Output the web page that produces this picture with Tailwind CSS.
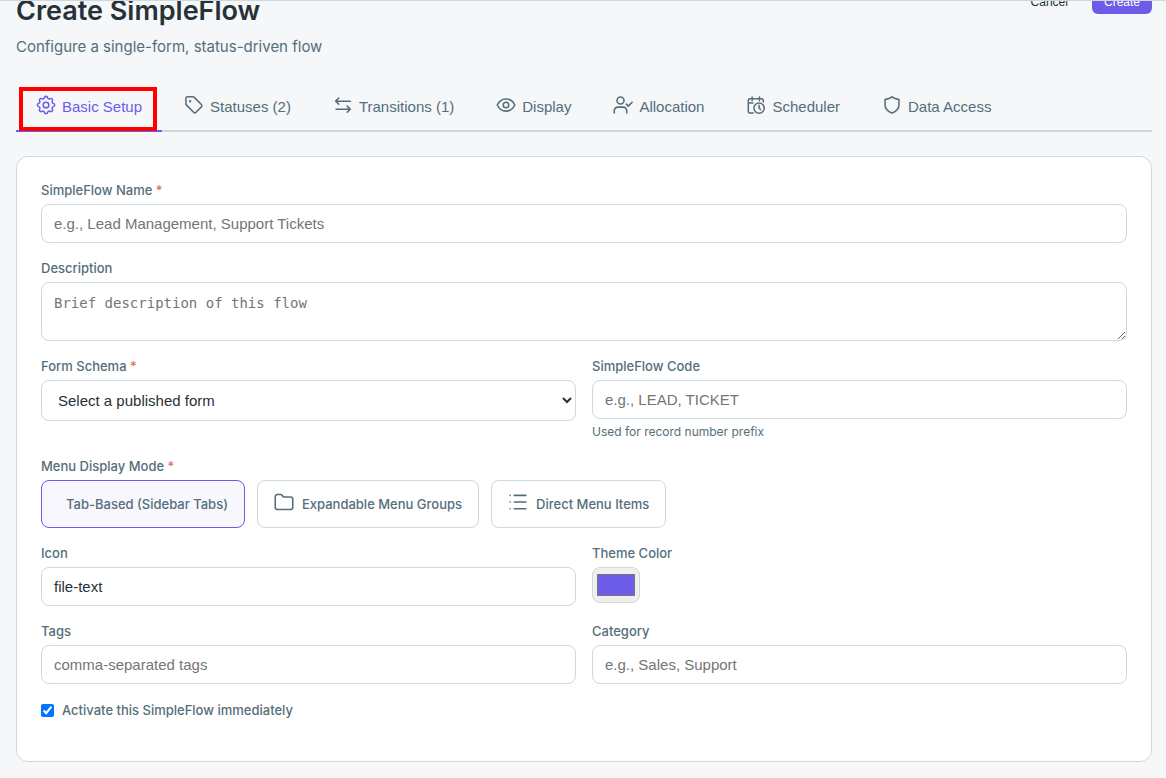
<!DOCTYPE html>
<html lang="en">

<head>
    <meta charset="UTF-8">
    <meta name="viewport" content="width=device-width, initial-scale=1.0">
    <script src="https://cdn.jsdelivr.net/npm/@tailwindcss/browser@4"></script>
    <title>Create SimpleFlow</title>
</head>

<body class="bg-[#f5f7f9] font-['Inter',sans-serif] text-[#546e7a]">
    <main class="min-h-screen overflow-hidden border-t border-[#cfd8dc] pl-4 pr-[14px] pb-4">
        <!-- page header -->
        <header class="flex items-start justify-between -mt-3 mb-6">
            <div class="pt-1">
                <h1 class="text-[27px] leading-9 font-semibold text-[#263238]">Create SimpleFlow</h1>
                <p class="mt-[7px] text-[15px] leading-[22px]">Configure a single-form, status-driven flow</p>
            </div>
            <div class="flex gap-3 font-['Liberation_Sans',Arial,sans-serif] text-xs">
                <button type="button" class="h-[25px] px-3 text-[#263238]">Cancel</button>
                <button type="button" class="h-[25px] px-3 rounded-md bg-[#6c5ce7] text-white">Create</button>
            </div>
        </header>

        <!-- tabs -->
        <nav class="flex gap-0.5 border-b-2 border-[#cfd8dc] mb-6 font-['Liberation_Sans',Arial,sans-serif] text-[15px]">
            <button type="button" class="relative flex gap-1.5 h-[50px] px-5 pt-[13px] -mb-0.5 border-b-2 border-[#6c5ce7] text-[#6c5ce7] whitespace-nowrap">
                <svg class="size-5" viewBox="1.5 1.5 21 21" fill="none" stroke="currentColor" stroke-width="1.6" stroke-linecap="round" stroke-linejoin="round">
                    <path d="M10.3 4.3c.4-1.8 3-1.8 3.4 0a1.7 1.7 0 0 0 2.6 1.1c1.5-.9 3.3.8 2.4 2.4a1.7 1.7 0 0 0 1 2.5c1.8.5 1.8 3 0 3.4a1.7 1.7 0 0 0-1 2.6c.9 1.5-.9 3.3-2.4 2.4a1.7 1.7 0 0 0-2.6 1c-.4 1.8-3 1.8-3.4 0a1.7 1.7 0 0 0-2.6-1c-1.5.9-3.3-.9-2.4-2.4a1.7 1.7 0 0 0-1-2.6c-1.8-.4-1.8-2.9 0-3.4a1.7 1.7 0 0 0 1-2.5c-.9-1.6.9-3.3 2.4-2.4a1.7 1.7 0 0 0 2.6-1.1Z" />
                    <circle cx="12" cy="12" r="3" />
                </svg>
                <span class="leading-6">Basic Setup</span>
                <span class="absolute left-[3px] right-[5px] top-[5px] -bottom-px border-4 border-[#ff0000]"></span>
            </button>
            <button type="button" class="flex gap-1.5 h-12 px-5 pt-[13px] whitespace-nowrap">
                <svg class="size-5" viewBox="-1 -1 26 26" fill="none" stroke="currentColor" stroke-width="2" stroke-linecap="round" stroke-linejoin="round">
                    <path d="M1.5 3.7v6.6c0 .7.3 1.4.8 1.9l9.2 9.2a2.2 2.2 0 0 0 3.1 0l7-7a2.2 2.2 0 0 0 0-3.1l-9.2-9.2a2.6 2.6 0 0 0-1.9-.8H3.700a2.200 2.200 0 0 0-2.200 2.400Z" />
                    <circle cx="7" cy="7" r=".6" />
                </svg>
                <span class="leading-6">Statuses (2)</span>
            </button>
            <button type="button" class="flex gap-1.5 h-12 px-5 pt-[13px] whitespace-nowrap">
                <svg class="size-5" viewBox="-1 -1 26 26" fill="none" stroke="currentColor" stroke-width="2" stroke-linecap="round" stroke-linejoin="round">
                    <path d="M21.5 7H3M6.5 3l-4 4 4 4M3 17.500h18M17.500 13.500l4 4-4 4" />
                </svg>
                <span class="leading-6">Transitions (1)</span>
            </button>
            <button type="button" class="flex gap-1.5 h-12 px-5 pt-[13px] whitespace-nowrap">
                <svg class="size-5" viewBox="0 0 24 24" fill="none" stroke="currentColor" stroke-width="1.9" stroke-linecap="round" stroke-linejoin="round">
                    <path d="M1.500 12C3.500 7.500 7.200 4.700 12 4.700S20.500 7.500 22.500 12c-2 4.500-5.700 7.300-10.500 7.300S3.500 16.500 1.500 12Z" />
                    <circle cx="12" cy="12" r="3.300" />
                </svg>
                <span class="leading-6">Display</span>
            </button>
            <button type="button" class="flex gap-1.5 h-12 px-5 pt-[13px] whitespace-nowrap">
                <svg class="size-5" viewBox="0 0 24 24" fill="none" stroke="currentColor" stroke-width="1.9" stroke-linecap="round" stroke-linejoin="round">
                    <circle cx="9" cy="6.500" r="4.200" />
                    <path d="M1.500 21.500v-2.500a4.500 4.500 0 0 1 4.500-4.500h6a4.500 4.500 0 0 1 4.500 4.500v2.500M16 11l2.300 2.300 4.700-4.600" />
                </svg>
                <span class="leading-6">Allocation</span>
            </button>
            <button type="button" class="flex gap-1.5 h-12 px-5 pt-[13px] whitespace-nowrap">
                <svg class="size-5" viewBox="-1 -1 26 26" fill="none" stroke="currentColor" stroke-width="2" stroke-linecap="round" stroke-linejoin="round">
                    <path d="M7 1.500v5M16.500 1.500v5M11 4h5.500M21.500 8V6a2 2 0 0 0-2-2H4a2 2 0 0 0-2 2v14.500a2 2 0 0 0 2 2h4.500M2 9.500h6" />
                    <circle cx="16" cy="16" r="6.700" />
                    <path d="M16 12.500V16l1.800 1.800" />
                </svg>
                <span class="leading-6">Scheduler</span>
            </button>
            <button type="button" class="flex gap-1.5 h-12 px-5 pt-[13px] whitespace-nowrap">
                <svg class="size-5" viewBox="-1 -1 26 26" fill="none" stroke="currentColor" stroke-width="2" stroke-linecap="round" stroke-linejoin="round">
                    <path d="M12 1.500c2.300 2 5.400 3 8.500 3.200.300 0 .500.300.500.600V12c0 5.500-3.800 8.600-9 10.500C6.800 20.600 3 17.500 3 12V5.300c0-.300.200-.600.500-.600C6.600 4.500 9.700 3.500 12 1.500Z" />
                </svg>
                <span class="leading-6">Data Access</span>
            </button>
        </nav>

        <!-- basic setup form -->
        <form class="bg-white border border-[#cfd8dc] rounded-xl p-6 text-[13px] leading-[19px] font-medium">
            <div class="mb-4">
                <label for="name" class="block mb-1">SimpleFlow Name <span class="text-[#e17055]">*</span></label>
                <input id="name" type="text" placeholder="e.g., Lead Management, Support Tickets"
                    class="block w-full h-[39px] px-3 border border-[#cfd8dc] rounded-lg font-['Liberation_Sans',Arial,sans-serif] text-[15px] font-normal text-[#263238] placeholder:text-[#757575]">
            </div>
            <div class="mb-4">
                <label for="description" class="block mb-1">Description</label>
                <textarea id="description" placeholder="Brief description of this flow"
                    class="block w-full h-[59px] px-3 py-2.5 border border-[#cfd8dc] rounded-lg font-['DejaVu_Sans_Mono',monospace] text-sm leading-5 font-normal text-[#263238] placeholder:text-[#757575] resize-y"></textarea>
            </div>
            <div class="grid grid-cols-2 gap-4 mb-4">
                <div>
                    <label for="schema" class="block mb-1">Form Schema <span class="text-[#e17055]">*</span></label>
                    <select id="schema"
                        class="block w-full h-[41px] px-3 border border-[#cfd8dc] rounded-lg bg-white font-['Liberation_Sans',Arial,sans-serif] text-[15px] font-normal text-[#263238]">
                        <option>Select a published form</option>
                    </select>
                </div>
                <div>
                    <label for="code" class="block mb-1">SimpleFlow Code</label>
                    <input id="code" type="text" placeholder="e.g., LEAD, TICKET"
                        class="block w-full h-[39px] px-3 border border-[#cfd8dc] rounded-lg font-['Liberation_Sans',Arial,sans-serif] text-[15px] font-normal text-[#263238] placeholder:text-[#757575]">
                    <p class="mt-1 text-xs leading-[18px] font-normal">Used for record number prefix</p>
                </div>
            </div>
            <div class="mb-4">
                <p class="mb-1">Menu Display Mode <span class="text-[#e17055]">*</span></p>
                <div class="flex gap-3">
                    <button type="button" class="h-12 pl-6 pr-4 border border-[#6c5ce7] rounded-lg bg-[#f8f7fe]">Tab-Based (Sidebar Tabs)</button>
                    <button type="button" class="flex gap-2 h-12 px-4 pt-[11px] border border-[#cfd8dc] rounded-lg">
                        <svg class="size-5" viewBox="0 0 24 24" fill="none" stroke="currentColor" stroke-width="1.9" stroke-linejoin="round">
                            <path d="M1.500 18.500v-13a2.500 2.500 0 0 1 2.500-2.500h4c.700 0 1.300.300 1.700.800L11.300 6H20a2.500 2.500 0 0 1 2.500 2.500v10a2.500 2.500 0 0 1-2.500 2.500H4a2.500 2.500 0 0 1-2.500-2.500Z" />
                        </svg>
                        <span class="leading-6">Expandable Menu Groups</span>
                    </button>
                    <button type="button" class="flex gap-2 h-12 px-4 pt-[11px] border border-[#cfd8dc] rounded-lg">
                        <svg class="size-5" viewBox="0 0 24 24" fill="none" stroke="currentColor" stroke-width="1.9" stroke-linecap="round">
                            <path d="M7.500 4h14M7.500 12h14M7.500 20h14M2.500 4h.010M2.500 12h.010M2.500 20h.010" />
                        </svg>
                        <span class="leading-6">Direct Menu Items</span>
                    </button>
                </div>
            </div>
            <div class="grid grid-cols-2 gap-4 mb-4">
                <div>
                    <label for="icon" class="block mb-1">Icon</label>
                    <input id="icon" type="text" value="file-text"
                        class="block w-full h-[39px] px-3 border border-[#cfd8dc] rounded-lg font-['Liberation_Sans',Arial,sans-serif] text-[15px] font-normal text-[#263238]">
                </div>
                <div>
                    <label for="color" class="block mb-1">Theme Color</label>
                    <input id="color" type="color" value="#6c5ce7"
                        class="block w-12 h-9 px-0.5 py-0.5 border border-[#cfd8dc] rounded-lg bg-[#efefef]">
                </div>
            </div>
            <div class="grid grid-cols-2 gap-4 mb-4">
                <div>
                    <label for="tags" class="block mb-1">Tags</label>
                    <input id="tags" type="text" placeholder="comma-separated tags"
                        class="block w-full h-[39px] px-3 border border-[#cfd8dc] rounded-lg font-['Liberation_Sans',Arial,sans-serif] text-[15px] font-normal text-[#263238] placeholder:text-[#757575]">
                </div>
                <div>
                    <label for="category" class="block mb-1">Category</label>
                    <input id="category" type="text" placeholder="e.g., Sales, Support"
                        class="block w-full h-[39px] px-3 border border-[#cfd8dc] rounded-lg font-['Liberation_Sans',Arial,sans-serif] text-[15px] font-normal text-[#263238] placeholder:text-[#757575]">
                </div>
            </div>
            <label class="flex items-center gap-2 py-px mb-4">
                <input type="checkbox" checked class="size-[13px]">
                Activate this SimpleFlow immediately
            </label>
        </form>
    </main>
</body>

</html>
